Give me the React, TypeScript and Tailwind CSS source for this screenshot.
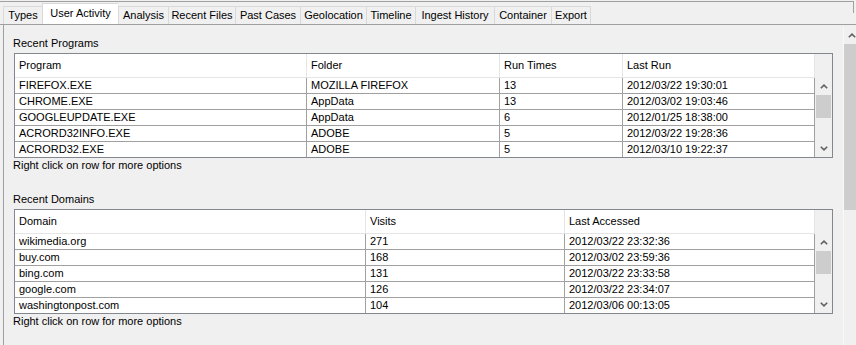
import React from 'react'

const TABS = [
  { label: 'Types',          w: 'w-[39px]' },
  { label: 'User Activity',  w: 'w-[76px]', active: true },
  { label: 'Analysis',       w: 'w-[50px]' },
  { label: 'Recent Files',   w: 'w-[67px]' },
  { label: 'Past Cases',     w: 'w-[65px]' },
  { label: 'Geolocation',    w: 'w-[66px]' },
  { label: 'Timeline',       w: 'w-[49px]' },
  { label: 'Ingest History', w: 'w-[79px]' },
  { label: 'Container',      w: 'w-[57px]' },
  { label: 'Export',         w: 'w-[40px]' },
]

const PROGRAM_COLS = [
  { label: 'Program',   w: 'w-[292px]' },
  { label: 'Folder',    w: 'w-[193px]' },
  { label: 'Run Times', w: 'w-[123px]' },
  { label: 'Last Run',  w: 'w-[192px]' },
]

const PROGRAMS = [
  ['FIREFOX.EXE',      'MOZILLA FIREFOX', '13', '2012/03/22 19:30:01'],
  ['CHROME.EXE',       'AppData',         '13', '2012/03/02 19:03:46'],
  ['GOOGLEUPDATE.EXE', 'AppData',         '6',  '2012/01/25 18:38:00'],
  ['ACRORD32INFO.EXE', 'ADOBE',           '5',  '2012/03/22 19:28:36'],
  ['ACRORD32.EXE',     'ADOBE',           '5',  '2012/03/10 19:22:37'],
]

const DOMAIN_COLS = [
  { label: 'Domain',        w: 'w-[351px]' },
  { label: 'Visits',        w: 'w-[199px]' },
  { label: 'Last Accessed', w: 'w-[250px]' },
]

const DOMAINS = [
  ['wikimedia.org',      '271', '2012/03/22 23:32:36'],
  ['buy.com',            '168', '2012/03/02 23:59:36'],
  ['bing.com',           '131', '2012/03/22 23:33:58'],
  ['google.com',         '126', '2012/03/22 23:34:07'],
  ['washingtonpost.com', '104', '2012/03/06 00:13:05'],
]

function Chevron({ down }: { down?: boolean }) {
  return (
    <svg width="8" height="5" viewBox="0 0 8 5" className={down ? 'rotate-180' : ''}>
      <path d="M0.8 4.3 L4 1.2 L7.2 4.3" fill="none" stroke="#606060" strokeWidth="1.6" />
    </svg>
  )
}

function TableScrollbar() {
  return (
    <div className="w-[17px] flex flex-col bg-[#f0f0f0]">
      {/* header corner */}
      <div className="h-[24px]" />
      <div className="h-[17px] flex items-center justify-center">
        <Chevron />
      </div>
      <div className="h-[23px] mx-px bg-[#cdcdcd]" />
      <div className="flex-1" />
      <div className="h-[17px] flex items-center justify-center">
        <Chevron down />
      </div>
    </div>
  )
}

function DataTable({ cols, rows }: { cols: { label: string; w: string }[]; rows: string[][] }) {
  return (
    <div className="ml-px w-[819px] flex border border-[#828790] bg-white">
      <div className="w-[800px]">
        <div className="flex h-[24px] border-b border-[#e5e5e5]">
          {cols.map(c => (
            <div key={c.label} className={`${c.w} flex items-center pl-[4px] border-r border-[#e5e5e5]`}>
              {c.label}
            </div>
          ))}
        </div>
        {rows.map((r, i) => (
          <div
            key={r[0]}
            className={`flex ${i < rows.length - 1 ? 'h-[16px] border-b border-[#a0a0a0]' : 'h-[15px]'}`}
          >
            {r.map((cell, j) => (
              <div key={j} className={`${cols[j].w} pl-[4px] leading-[15px] border-r border-[#a0a0a0] whitespace-nowrap`}>
                {cell}
              </div>
            ))}
          </div>
        ))}
      </div>
      <TableScrollbar />
    </div>
  )
}

export default function App() {
  return (
    <div className="w-[856px] h-[345px] overflow-hidden bg-[#f0f0f0] text-[11px] text-black font-['Liberation_Sans',Arial,sans-serif]">
      {/* Tab strip */}
      <div className="grid h-[25px] border-b border-[#a0a0a0]">
        <div className="col-start-1 row-start-1 mt-px h-[12px] w-[854px] border-t border-r border-[#a0a0a0]" />
        <div className="col-start-1 row-start-1 flex items-end pl-[3px]">
          {TABS.map((t, i) => (
            <div
              key={t.label}
              className={`${t.w} flex items-center justify-center whitespace-nowrap border-t border-l border-[#d9d9d9] ${
                i === TABS.length - 1 ? 'border-r' : ''
              } ${t.active ? 'h-[21px] bg-white pb-[2px]' : 'h-[18px] bg-[#f0f0f0]'}`}
            >
              {t.label}
            </div>
          ))}
        </div>
      </div>

      <div className="flex w-[860px] h-[320px]">
        {/* Panel */}
        <div className="w-[843px] pl-[3px]">
          <div className="h-full border-l border-[#a0a0a0] pl-[9px] pt-[11px]">
            <div className="h-[14px] leading-[14px] mb-[3px]">Recent Programs</div>
            <DataTable cols={PROGRAM_COLS} rows={PROGRAMS} />
            <div className="h-[14px] leading-[14px]">Right click on row for more options</div>

            <div className="h-[14px] leading-[14px] mt-[20px] mb-[3px]">Recent Domains</div>
            <DataTable cols={DOMAIN_COLS} rows={DOMAINS} />
            <div className="h-[14px] leading-[14px]">Right click on row for more options</div>
          </div>
        </div>

        {/* Outer scrollbar */}
        <div className="w-[17px] mt-[2px] flex flex-col bg-[#f0f0f0] border-l border-[#f9f9f9]">
          <div className="h-[17px] flex items-center justify-center">
            <Chevron />
          </div>
          <div className="h-[166px] bg-[#cdcdcd]" />
          <div className="flex-1" />
        </div>
      </div>
    </div>
  )
}
